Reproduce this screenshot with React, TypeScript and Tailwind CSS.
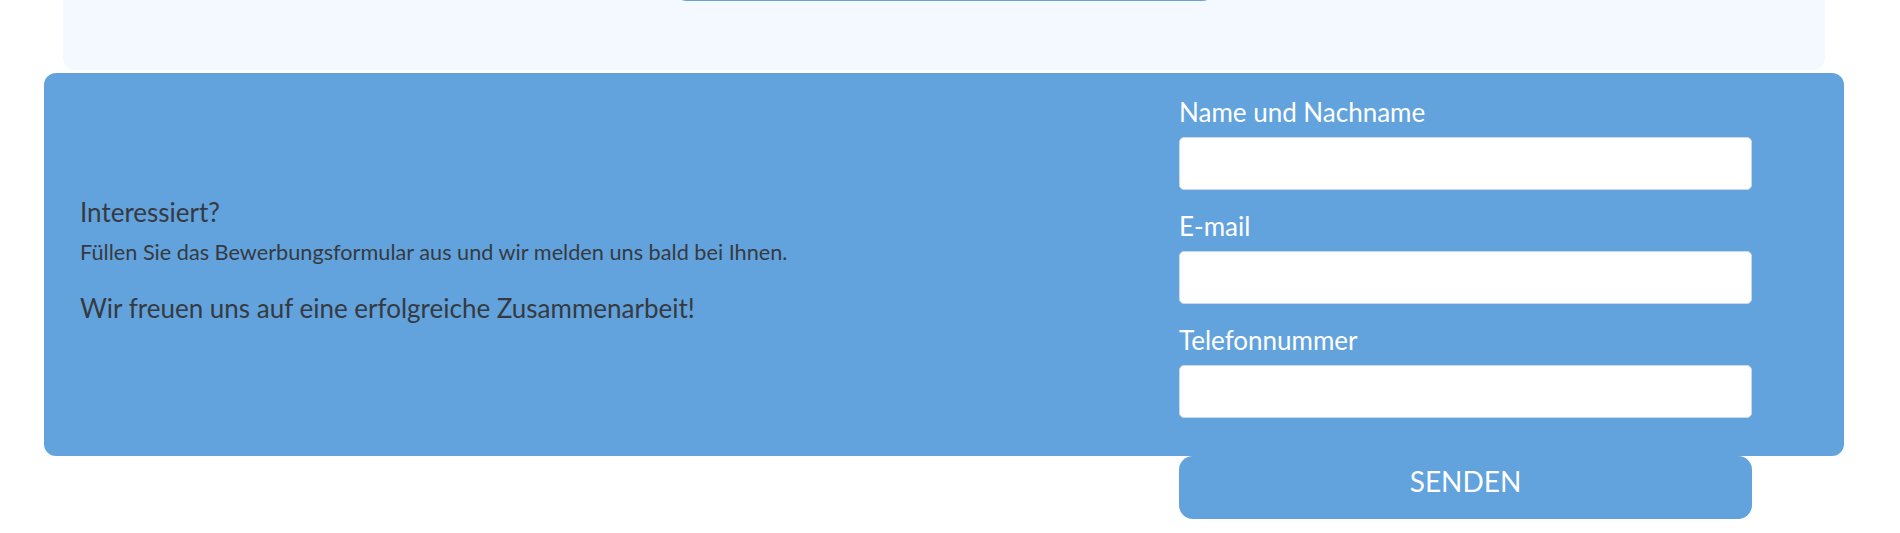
import type { ReactNode } from 'react'

const font = { fontFamily: 'Lato, "Open Sans", sans-serif' }

function Field({ label, type = 'text' }: { label: string; type?: string }) {
  return (
    <label className="flex flex-col">
      <span className="h-[30px] text-[26px] leading-[28px] text-white">{label}</span>
      <input
        type={type}
        className="mt-[9px] h-[53px] w-full rounded-[5px] border border-[#c9d9ec] bg-white px-3 text-[18px] text-[#333] outline-none"
      />
    </label>
  )
}

function Line({ className, children }: { className: string; children: ReactNode }) {
  return <p className={`text-[#363a40] ${className}`}>{children}</p>
}

export default function App() {
  return (
    <div className="min-h-[533px] w-full bg-white" style={font}>
      {/* previous section, only its bottom is visible */}
      <div className="ml-[63px] w-[1762px] -mt-[30px] flex h-[100px] flex-col items-center rounded-b-[12px] bg-[#f3f9fe]">
        <div className="h-[31px] w-[543px] rounded-b-[14px] border-b-2 border-[#6a9fd3] bg-[#f3f9fe]" />
      </div>

      <div className="ml-[44px] mt-[3px] w-[1800px]">
        <div className="flex h-[383px] rounded-[12px] bg-[#62a3de] pt-[25px]">
          <div className="flex flex-1 flex-col justify-center pb-[34px] pl-[36px]">
            <Line className="text-[26px] leading-[32px]">Interessiert?</Line>
            <Line className="mt-[10px] text-[21.7px] leading-[28px]">
              Füllen Sie das Bewerbungsformular aus und wir melden uns bald bei Ihnen.
            </Line>
            <Line className="mt-[26px] text-[26px] leading-[32px]">
              Wir freuen uns auf eine erfolgreiche Zusammenarbeit!
            </Line>
          </div>
          <form className="mr-[92px] flex w-[573px] flex-col gap-[22px]" onSubmit={(e) => e.preventDefault()}>
            <Field label="Name und Nachname" />
            <Field label="E-mail" type="email" />
            <Field label="Telefonnummer" type="tel" />
          </form>
        </div>
        <div className="flex justify-end pr-[92px]">
          <button
            type="button"
            className="h-[63px] w-[573px] rounded-[14px] bg-[#62a3de] pb-[13px] text-[28px] uppercase text-white"
          >
            Senden
          </button>
        </div>
      </div>
    </div>
  )
}
